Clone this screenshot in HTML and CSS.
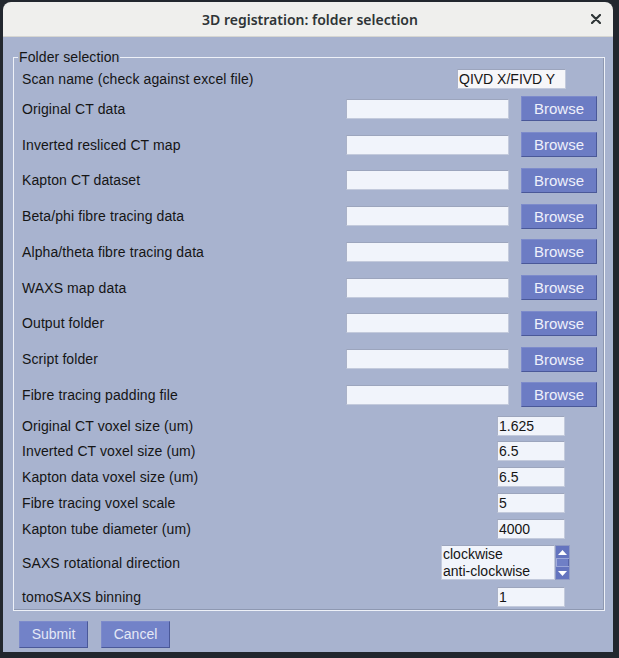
FILE: index.html
```html
<!DOCTYPE html>
<html>
<head>
<meta charset="utf-8">
<title>3D registration: folder selection</title>
<link rel="stylesheet" href="styles.css">
</head>
<body>
<div class="window">
  <div class="titlebar">
    <span class="title">3D registration: folder selection</span>
    <span class="close"><svg width="10" height="10" viewBox="0 0 10 10"><path d="M1 1 L9 9 M9 1 L1 9" stroke="#2e3436" stroke-width="2.2" stroke-linecap="round"/></svg></span>
  </div>
  <div class="content">
    <fieldset class="group">
      <legend class="legend">Folder selection</legend>
      <div class="row row-scan"><span class="label">Scan name (check against excel file)</span><span class="field field-scan">QIVD X/FIVD Y</span></div>
      <div class="row row-file"><span class="label">Original CT data</span><span class="field field-path"></span><span class="btn btn-browse">Browse</span></div>
      <div class="row row-file"><span class="label">Inverted resliced CT map</span><span class="field field-path"></span><span class="btn btn-browse">Browse</span></div>
      <div class="row row-file"><span class="label">Kapton CT dataset</span><span class="field field-path"></span><span class="btn btn-browse">Browse</span></div>
      <div class="row row-file"><span class="label">Beta/phi fibre tracing data</span><span class="field field-path"></span><span class="btn btn-browse">Browse</span></div>
      <div class="row row-file"><span class="label">Alpha/theta fibre tracing data</span><span class="field field-path"></span><span class="btn btn-browse">Browse</span></div>
      <div class="row row-file"><span class="label">WAXS map data</span><span class="field field-path"></span><span class="btn btn-browse">Browse</span></div>
      <div class="row row-file"><span class="label">Output folder</span><span class="field field-path"></span><span class="btn btn-browse">Browse</span></div>
      <div class="row row-file"><span class="label">Script folder</span><span class="field field-path"></span><span class="btn btn-browse">Browse</span></div>
      <div class="row row-file"><span class="label">Fibre tracing padding file</span><span class="field field-path"></span><span class="btn btn-browse">Browse</span></div>
      <div class="row row-num"><span class="label">Original CT voxel size (um)</span><span class="field field-num">1.625</span></div>
      <div class="row row-num"><span class="label">Inverted CT voxel size (um)</span><span class="field field-num">6.5</span></div>
      <div class="row row-num"><span class="label">Kapton data voxel size (um)</span><span class="field field-num">6.5</span></div>
      <div class="row row-num"><span class="label">Fibre tracing voxel scale</span><span class="field field-num">5</span></div>
      <div class="row row-num"><span class="label">Kapton tube diameter (um)</span><span class="field field-num">4000</span></div>
      <div class="row row-list"><span class="label">SAXS rotational direction</span>
        <div class="listbox">
          <div class="list-items"><div class="item">clockwise</div><div class="item">anti-clockwise</div></div>
          <div class="scrollbar">
            <div class="arrow"><svg width="11" height="7" viewBox="0 0 11 7"><path d="M1 6 L5.5 1 L10 6 Z" fill="#ffffff"/></svg></div>
            <div class="thumb"></div>
            <div class="arrow"><svg width="11" height="7" viewBox="0 0 11 7"><path d="M1 1 L5.5 6 L10 1 Z" fill="#ffffff"/></svg></div>
          </div>
        </div>
      </div>
      <div class="row row-last"><span class="label">tomoSAXS binning</span><span class="field field-num">1</span></div>
    </fieldset>
    <div class="actions">
      <span class="btn btn-action">Submit</span>
      <span class="btn btn-action">Cancel</span>
    </div>
  </div>
</div>
</body>
</html>
```

FILE: styles.css
```css
html, body {
  margin: 0;
  padding: 0;
}
body {
  background: #22272e;
  width: 619px;
  height: 658px;
  overflow: hidden;
  font-family: "Liberation Sans", Arial, sans-serif;
  font-size: 14px;
  color: #151515;
}
.window {
  margin: 2px 0 0 3px;
  width: 610px;
  height: 650px;
  display: flex;
  flex-direction: column;
  border-radius: 8px 8px 0 0;
  overflow: hidden;
}
.titlebar {
  height: 34px;
  flex: none;
  background: #efefed;
  border-bottom: 1px solid #d6d6d2;
  display: grid;
  grid-template-columns: 1fr auto 1fr;
  align-items: center;
}
.title {
  grid-column: 2;
  font-family: "Noto Sans", "DejaVu Sans", sans-serif;
  font-weight: 600;
  font-size: 14px;
  color: #2e3436;
  padding-left: 4px;
}
.close {
  grid-column: 3;
  justify-self: end;
  margin-right: 12px;
  display: flex;
  width: 10px;
  height: 10px;
}
.content {
  flex: 1;
  background: #a8b3cf;
  padding: 12px 8px 0 10px;
}
.group {
  margin: 0;
  padding: 2px 7px 0 8px;
  border: 1px solid #eef1f8;
  box-shadow: inset -1px -1px 0 #8e98b1;
}
.legend {
  padding: 0 1px;
  margin-left: -4px;
  line-height: 16px;
  color: #151515;
  letter-spacing: 0.1px;
}
.row {
  display: flex;
  align-items: center;
}
.label {
  flex: 1;
  white-space: nowrap;
  letter-spacing: 0.1px;
}
.row-scan { height: 24px; }
.row-file { height: 35.75px; }
.row-num { height: 25.8px; }
.row-list { height: 42.5px; }
.row-last { height: 25.5px; }
.field {
  box-sizing: border-box;
  height: 20px;
  line-height: 18px;
  background: #f1f4fb;
  border: 1px solid #c3cadc;
  border-top-color: #9ca5bd;
  border-left-color: #aab2c8;
  padding-left: 1px;
  white-space: nowrap;
  overflow: hidden;
}
.field-scan {
  width: 109px;
  margin-right: 31px;
  background: #f6f6f9;
}
.field-path {
  width: 163px;
  margin-right: 12px;
}
.field-num {
  width: 68px;
  margin-right: 32px;
}
.btn {
  box-sizing: border-box;
  display: flex;
  align-items: center;
  justify-content: center;
  background: #6c7cc4;
  border: 1px solid #4a5898;
  border-top-color: #7d8bcb;
  border-left-color: #7d8bcb;
  color: #eef0fb;
}
.btn-browse {
  width: 76px;
  height: 25px;
  font-size: 15px;
}
.listbox {
  display: flex;
  height: 35px;
  margin-right: 27px;
}
.list-items {
  box-sizing: border-box;
  width: 114px;
  background: #f1f4fb;
  border: 1px solid #c3cadc;
  border-top-color: #9ca5bd;
  padding: 0 0 0 1px;
  line-height: 16.5px;
}
.scrollbar {
  width: 15px;
  display: flex;
  flex-direction: column;
  background: #6c7cc4;
  border: 1px solid #8f9ac4;
  box-sizing: border-box;
}
.arrow {
  height: 12px;
  display: flex;
  align-items: center;
  justify-content: center;
  background: #6474bf;
  border-bottom: 1px solid #9aa6d8;
}
.arrow:last-child {
  border-bottom: none;
  border-top: 1px solid #9aa6d8;
}
.thumb {
  flex: 1;
  background: #6f7fc6;
  border-left: 1px solid #a3addc;
  border-right: 1px solid #5664a8;
}
.actions {
  display: flex;
  gap: 13px;
  margin: 10px 0 0 6px;
}
.btn-action {
  width: 69px;
  height: 27px;
  background: #7282c8;
  color: #e4e8f6;
}
```
